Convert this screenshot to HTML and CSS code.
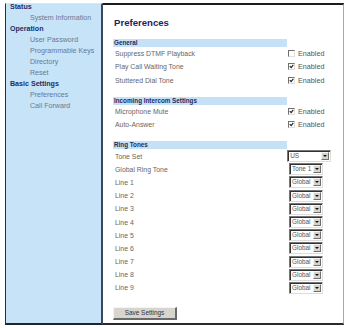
FILE: index.html
```html
<!DOCTYPE html>
<html>
<head>
<meta charset="utf-8">
<link rel="stylesheet" href="styles.css">
</head>
<body>
<div class="frame">
  <nav class="side">
    <ul class="nav">
      <li class="head">Status</li>
      <li class="item">System Information</li>
      <li class="head">Operation</li>
      <li class="item">User Password</li>
      <li class="item">Programmable Keys</li>
      <li class="item">Directory</li>
      <li class="item">Reset</li>
      <li class="head">Basic Settings</li>
      <li class="item">Preferences</li>
      <li class="item">Call Forward</li>
    </ul>
  </nav>
  <main class="main">
    <h1 class="title">Preferences</h1>

    <section class="group first">
      <div class="bar">General</div>
      <div class="row"><span class="label">Suppress DTMF Playback</span><span class="opt"><span class="cb"></span>Enabled</span></div>
      <div class="row"><span class="label">Play Call Waiting Tone</span><span class="opt"><span class="cb on"><svg viewBox="0 0 7 7"><path d="M1 3 L3 5 L6 1.2" /></svg></span>Enabled</span></div>
      <div class="row"><span class="label">Stuttered Dial Tone</span><span class="opt"><span class="cb on"><svg viewBox="0 0 7 7"><path d="M1 3 L3 5 L6 1.2" /></svg></span>Enabled</span></div>
    </section>

    <section class="group">
      <div class="bar">Incoming Intercom Settings</div>
      <div class="row"><span class="label">Microphone Mute</span><span class="opt"><span class="cb on"><svg viewBox="0 0 7 7"><path d="M1 3 L3 5 L6 1.2" /></svg></span>Enabled</span></div>
      <div class="row"><span class="label">Auto-Answer</span><span class="opt"><span class="cb on"><svg viewBox="0 0 7 7"><path d="M1 3 L3 5 L6 1.2" /></svg></span>Enabled</span></div>
    </section>

    <section class="group ring">
      <div class="bar">Ring Tones</div>
      <div class="srow"><span class="label">Tone Set</span><span class="sel wide"><span class="val">US</span><span class="arr"></span></span></div>
      <div class="srow"><span class="label">Global Ring Tone</span><span class="sel"><span class="val">Tone 1</span><span class="arr"></span></span></div>
      <div class="srow"><span class="label">Line 1</span><span class="sel"><span class="val">Global</span><span class="arr"></span></span></div>
      <div class="srow"><span class="label">Line 2</span><span class="sel"><span class="val">Global</span><span class="arr"></span></span></div>
      <div class="srow"><span class="label">Line 3</span><span class="sel"><span class="val">Global</span><span class="arr"></span></span></div>
      <div class="srow"><span class="label">Line 4</span><span class="sel"><span class="val">Global</span><span class="arr"></span></span></div>
      <div class="srow"><span class="label">Line 5</span><span class="sel"><span class="val">Global</span><span class="arr"></span></span></div>
      <div class="srow"><span class="label">Line 6</span><span class="sel"><span class="val">Global</span><span class="arr"></span></span></div>
      <div class="srow"><span class="label">Line 7</span><span class="sel"><span class="val">Global</span><span class="arr"></span></span></div>
      <div class="srow"><span class="label">Line 8</span><span class="sel"><span class="val">Global</span><span class="arr"></span></span></div>
      <div class="srow"><span class="label">Line 9</span><span class="sel"><span class="val">Global</span><span class="arr"></span></span></div>
    </section>

    <div class="actions"><button class="btn">Save Settings</button></div>
  </main>
</div>
</body>
</html>
```

FILE: styles.css
```css
* { box-sizing: border-box; }
html, body { margin: 0; padding: 0; background: #ffffff; }
body {
  font-family: "Liberation Sans", Arial, sans-serif;
  width: 345px;
  height: 328px;
  overflow: hidden;
}
.frame {
  display: flex;
  margin: 3px 0 0 5px;
  width: 339px;
  height: 322px;
}
.side {
  width: 98px;
  background: #c6e3f7;
  border-left: 1px solid #2a3040;
  border-right: 2px solid #3c4660;
  border-bottom: 2px solid #1e2430;
  border-top: 1px solid #d8e6f0;
  overflow: hidden;
}
.nav {
  list-style: none;
  margin: -2px 0 0 0;
  padding: 0;
  font-size: 7.1px;
  line-height: 11px;
}
.nav .head {
  font-weight: bold;
  color: #1d2d66;
  padding-left: 4px;
}
.nav .item {
  color: #6b7894;
  padding-left: 24px;
}
.main {
  flex: 1;
  border-top: 2px solid #1c1c1c;
  border-right: 1px solid #a8a8a8;
  border-bottom: 2px solid #2a2a2a;
  padding: 0 0 0 10px;
  display: flex;
  flex-direction: column;
}
.title {
  margin: 12px 0 0 1px;
  font-size: 9.6px;
  line-height: 11px;
  font-weight: bold;
  color: #1d2466;
}
.group { width: 218px; margin-top: 10px; }
.group.first { margin-top: 11px; }
.bar {
  width: 174px;
  height: 8px;
  background: #c4e1f6;
  color: #1d2a66;
  font-weight: bold;
  font-size: 6.3px;
  line-height: 8px;
  padding-left: 1px;
}
.row, .srow {
  display: flex;
  align-items: center;
  height: 13.3px;
  font-size: 6.9px;
  color: #666666;
}
.label { width: 175px; padding-left: 2px; }
.opt { display: flex; align-items: center; color: #555; font-size: 7.2px; }
.cb {
  width: 7px;
  height: 7px;
  margin-right: 3px;
  border-top: 1px solid #707070;
  border-left: 1px solid #707070;
  border-right: 1px solid #e0e0e0;
  border-bottom: 1px solid #e0e0e0;
  background: #fff;
  display: flex;
}
.cb svg { width: 5px; height: 5px; }
.cb svg path { fill: none; stroke: #222; stroke-width: 1.6; }
.srow { height: 13.2px; }
.srow .label { width: 176px; }
.sel {
  display: flex;
  align-items: center;
  width: 34px;
  height: 12px;
  border-top: 1px solid #777;
  border-left: 1px solid #777;
  border-right: 1px solid #ddd;
  border-bottom: 1px solid #ddd;
  background: #fff;
  box-shadow: inset 1px 1px 0 #333;
}
.sel.wide { width: 44px; margin-left: -1px; }
.sel .val {
  flex: 1;
  font-size: 6.4px;
  color: #555;
  padding-left: 2px;
  line-height: 10px;
  white-space: nowrap;
  overflow: hidden;
}
.sel .arr {
  flex: none;
  width: 8px;
  height: 8px;
  margin-right: 1px;
  background: #d6d3cc;
  border-top: 1px solid #f4f4f4;
  border-left: 1px solid #f4f4f4;
  border-right: 1px solid #707070;
  border-bottom: 1px solid #707070;
  position: relative;
}
.sel .arr::after {
  content: "";
  position: absolute;
  left: 1px;
  top: 2px;
  border-left: 2px solid transparent;
  border-right: 2px solid transparent;
  border-top: 2px solid #111;
}
.actions { display: flex; margin-top: 12px; }
.btn {
  width: 64px;
  height: 13px;
  padding: 0;
  font-family: "Liberation Sans", Arial, sans-serif;
  font-size: 6.4px;
  color: #333;
  background: #d8d5ce;
  border-top: 1px solid #f4f4f4;
  border-left: 1px solid #f4f4f4;
  border-right: 2px solid #6a6a6a;
  border-bottom: 2px solid #6a6a6a;
}
```
